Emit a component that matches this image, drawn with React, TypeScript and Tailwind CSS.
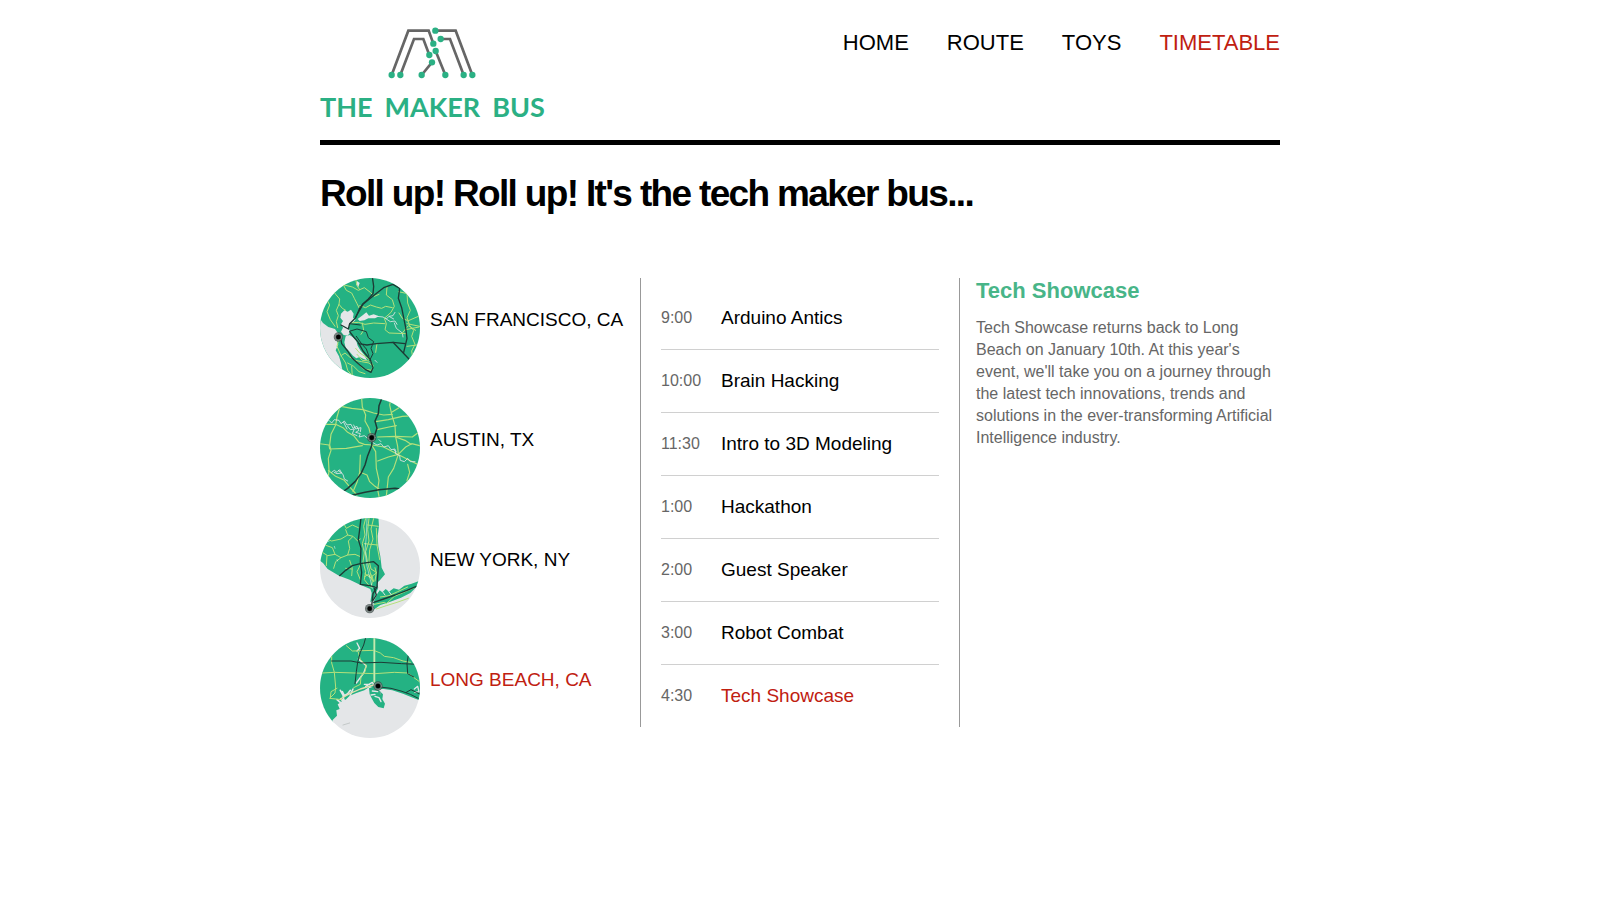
import type { ReactNode } from "react";

const navItems = [
  { label: "HOME", active: false },
  { label: "ROUTE", active: false },
  { label: "TOYS", active: false },
  { label: "TIMETABLE", active: true },
];

const events = [
  { time: "9:00", title: "Arduino Antics", active: false },
  { time: "10:00", title: "Brain Hacking", active: false },
  { time: "11:30", title: "Intro to 3D Modeling", active: false },
  { time: "1:00", title: "Hackathon", active: false },
  { time: "2:00", title: "Guest Speaker", active: false },
  { time: "3:00", title: "Robot Combat", active: false },
  { time: "4:30", title: "Tech Showcase", active: true },
];

const LAND = "#24b283";
const WATER = "#e4e6e8";
const MINOR = "#b5e07a";
const MAJOR = "#1d3b35";

function Marker({ x, y }: { x: number; y: number }) {
  return (
    <g>
      <circle cx={x} cy={y} r="14" fill="#3f4a48" fillOpacity="0.75" />
      <circle cx={x} cy={y} r="10.5" fill="none" stroke="#8b9794" strokeWidth="2" />
      <circle cx={x} cy={y} r="7" fill="#000" />
    </g>
  );
}

function MapCircle({ id, base, children }: { id: string; base: string; children: ReactNode }) {
  return (
    <svg className="size-[100px] shrink-0" viewBox="15 15 300 300" aria-hidden="true">
      <clipPath id={id}>
        <circle cx="165" cy="165" r="150" />
      </clipPath>
      <g clipPath={`url(#${id})`} fill="none" strokeLinejoin="round" strokeLinecap="round">
        <rect x="15" y="15" width="300" height="300" fill={base} />
        {children}
      </g>
    </svg>
  );
}

function SanFranciscoMap() {
  return (
    <MapCircle id="map-sf" base={LAND}>
      <g fill={WATER}>
        <path d="M10 130 L24 150 L40 162 L60 168 L70 182 L64 200 L70 214 L62 232 L72 250 L78 270 L84 300 L80 320 L10 320 Z" />
        <path d="M78 122 L88 112 L98 116 L108 110 L116 122 L114 134 L122 140 L112 150 L104 152 L102 164 L104 180 L98 188 L86 186 L78 176 L84 164 L78 154 L84 144 L76 134 Z" />
        <path d="M92 190 L104 186 L116 194 L124 204 L128 218 L136 232 L148 246 L156 262 L146 258 L134 252 L124 256 L114 248 L104 236 L92 224 L88 208 Z" />
        <path d="M128 138 L144 126 L154 118 L162 128 L176 124 L192 130 L180 136 L160 136 L148 142 L134 144 Z" />
        <path d="M126 24 L134 30 L130 42 L124 34 Z" />
      </g>
      <g stroke={WATER} strokeWidth="4">
        <path d="M186 130 L204 132 L214 138 L222 130 L234 128 L240 118 M214 138 L226 146 L240 144 L246 154 M222 130 L236 138 M180 262 L186 268 M238 150 L244 166 L262 180 L264 192" strokeWidth="2.5" />
      </g>
      <g stroke={MINOR} strokeWidth="3">
        <path d="M52 50 L62 64 L74 78 L72 94 L82 106 L92 112" />
        <path d="M72 94 L64 112 L70 128 L64 146 L68 164" />
        <path d="M84 34 L94 52 L110 60 L118 76 L126 92 L132 104" />
        <path d="M88 36 L112 42 L130 52 L148 44 L166 58 L178 70 L192 64" />
        <path d="M122 18 L126 38 L134 50" />
        <path d="M34 76 L44 96 L36 116 L46 140 L60 160" />
        <path d="M134 98 L152 104 L166 96 L184 102 L200 106 L212 100 L232 104" />
        <path d="M216 42 L214 66 L232 80 L238 100 L228 118 L208 136 L214 152 L210 170 L222 180 L272 182" />
        <path d="M106 150 L130 148 L150 154 L176 150 L210 152" />
        <path d="M142 150 L146 172 L138 184" />
        <path d="M250 56 L278 62 L290 54 M276 62 L278 90 L286 112 L276 134 L284 158 L296 172 L290 190 L300 214 L290 234 L294 258" />
        <path d="M252 120 L262 136 L276 142 M276 152 L314 160 M272 170 L312 162 M278 144 L310 130" />
        <path d="M276 220 L306 216 M262 180 L280 158 L302 172" />
        <path d="M72 196 L66 220 L78 248 L92 270 L98 292 L110 306" />
        <path d="M78 248 L90 240 L104 252 L120 262 L140 266 L162 270 L174 280" />
        <path d="M122 226 L134 240 L150 250 L166 262 L174 278 L170 292 L146 288 L128 272" />
        <path d="M98 270 L116 280 L132 296 L150 302 M110 280 L112 312" />
        <path d="M126 244 L142 262 L162 264 M186 212 L182 238" />
      </g>
      <g stroke={MAJOR} strokeWidth="4">
        <path d="M172 12 L176 40 L174 62 L160 78 L144 92 L134 106 L122 134 L104 152 L100 168 L78 156" />
        <path d="M122 132 L144 94 L178 66 L206 44 L234 34 L254 46 L250 76 L260 104 L266 134 L272 164 L276 196 L266 238" />
        <path d="M104 152 L136 156" strokeWidth="3" />
        <path d="M76 188 L80 212 L98 234 L112 256 L134 276 L152 290 L168 298 L174 284 L166 260 L144 234 L130 208 L116 192 L104 176" />
        <path d="M106 174 L126 168 L154 176 L160 194 L176 206 L168 226 L174 242 L164 262" strokeWidth="3" />
        <path d="M130 212 L156 216 L184 212 L234 208 L284 260" />
        <path d="M234 208 L270 212" />
        <path d="M124 190 L138 210 L154 228 L162 250" strokeWidth="3" />
      </g>
      <Marker x={70} y={192} />
    </MapCircle>
  );
}

function AustinMap() {
  return (
    <MapCircle id="map-austin" base={LAND}>
      <g stroke={MINOR} strokeWidth="3.5">
        <path d="M78 40 L110 46 L144 50 L176 60 L206 66 L232 64" />
        <path d="M140 16 L142 42 L152 66 L150 84 L162 106 L168 130" />
        <path d="M74 44 L66 72 L62 96 L48 124 L44 156 L48 172 L40 196 L42 232 L40 252" />
        <path d="M34 94 L62 94 L84 104 L98 118 L116 128 L132 148 L148 154 L172 156 L206 162 L248 184 L292 206 L316 218" />
        <path d="M14 152 L42 156 L44 168 L94 166 L142 158" />
        <path d="M228 16 L224 36 L230 64 L240 98 L242 132 L248 160 L250 184 L236 226 L220 252 L214 310" />
        <path d="M182 86 L220 80 L262 70 L304 68" />
        <path d="M186 110 L222 102 L244 98 M188 132 L242 130 L292 132 L308 120" />
        <path d="M170 156 L182 176 L184 226 L192 262 L188 290 L192 310" />
        <path d="M188 204 L220 192 L250 184 L272 162 L290 152 L314 158" />
        <path d="M242 132 L270 142 L288 154 M278 214 L284 238 L276 262 L284 284" />
        <path d="M136 238 L156 246 L164 266 L180 280 L192 288 M136 186 L134 238 L126 268 L114 296" />
        <path d="M40 232 L62 250 L88 262 L106 284 L126 306" />
        <path d="M272 26 L252 44 L230 58" />
      </g>
      <g stroke={WATER} strokeWidth="2.5">
        <path d="M30 88 L42 82 L50 90 L58 80 L72 82 L78 92 L88 84 L96 96 L108 94 L114 106 L126 100 L132 112 L122 118 L136 122 L132 132 L148 128 L158 136 L168 138" />
        <path d="M98 100 L106 110 L118 108 L112 122 L126 128 M116 96 L122 108 L138 104 L136 116 M86 88 L96 108" />
        <path d="M172 148 L186 156 L198 152 L206 162 L220 158 L228 170 L240 168 L242 182 L254 188 L256 202 L268 206 L278 196 L286 206 L300 206" />
        <path d="M192 140 L198 146 M236 170 L244 176" />
        <path d="M50 238 L58 232 L66 238 L74 230 L80 240 L66 242 L58 238 M70 232 L84 244 L88 258 L98 264" />
      </g>
      <g stroke={MAJOR} strokeWidth="4.5">
        <path d="M202 12 L192 38 L190 62 L180 84 L186 106 L180 124 L172 138 L170 158 L158 188 L150 216 L138 242 L120 266 L98 286 L78 300" />
        <path d="M114 306 L150 298 L192 290 L240 286 L274 290" />
      </g>
      <Marker x={170} y={134} />
    </MapCircle>
  );
}

function NewYorkMap() {
  return (
    <MapCircle id="map-ny" base={WATER}>
      <path d="M10 10 L190 10 L192 40 L188 70 L190 100 L196 130 L200 164 L210 184 L196 200 L186 210 L190 224 L182 242 L174 262 L166 268 L170 240 L166 228 L132 214 L104 200 L72 188 L38 168 L24 150 L10 140 Z" fill={LAND} />
      <path d="M176 266 L188 240 L194 232 L202 238 L212 228 L222 236 L236 226 L252 230 L268 218 L290 212 L312 204 L304 222 L286 240 L258 254 L226 266 L196 276 L176 290 Z" fill={LAND} />
      <g stroke={MINOR} strokeWidth="3">
        <path d="M152 16 L146 40 L150 66 L142 92 L148 120 L144 146 L152 176 L148 200 L164 220" />
        <path d="M162 16 L158 50 L162 84 L152 116 L158 150 L166 180 L172 206 L168 224" />
        <path d="M176 16 L168 48 L174 78 L164 110 L162 142 L168 168 L184 178 L180 204" />
        <path d="M158 36 L190 40 M148 92 L188 96 M184 46 L186 96 L194 140" />
        <path d="M92 50 L98 66 L114 70 L128 84 L136 78 M98 66 L78 78 L50 84 L34 78" />
        <path d="M84 28 L94 46 L112 36 L130 44" />
        <path d="M22 118 L38 128 L60 124 L78 134 L98 126 L104 106 L100 84 L112 72" />
        <path d="M60 124 L52 104 L30 96 M78 134 L62 146 L56 166 M98 126 L120 124 L134 130 M36 128 L34 158" />
        <path d="M104 142 L112 166 L110 188 M136 156 L126 176 L136 200 M92 166 L110 168" />
        <path d="M150 182 L166 194 L184 180 L180 164 M148 192 L160 184 L176 206 L170 186" />
        <path d="M178 274 L208 268 L214 272 L238 250 L266 238 L298 224" />
        <path d="M184 288 L214 278 L246 268 L280 256" />
        <path d="M196 252 L222 248 L248 236 L278 222" />
      </g>
      <g stroke="#ffffff" strokeWidth="1.5">
        <path d="M156 16 L154 70 L150 112 L156 160 L166 200 L172 226 M58 100 L60 106 M66 140 L68 144 M38 84 L42 86" />
      </g>
      <path d="M182 222 L194 226 L186 240 M204 238 L210 246 M222 236 L228 244" stroke={WATER} strokeWidth="3" />
      <g stroke={MAJOR} strokeWidth="4">
        <path d="M138 14 L134 50 L130 80 L138 106 L136 150 L140 178 L136 214 L164 218 L186 224" />
        <path d="M74 188 L92 172 L112 158 L136 152 L176 146 L190 158 L188 190 L186 222 L174 242 L170 280" />
        <path d="M176 268 L206 258 L240 246 L276 232 L304 220" />
        <path d="M178 226 L184 246 L174 262" />
      </g>
      <Marker x={164} y={287} />
    </MapCircle>
  );
}

function LongBeachMap() {
  return (
    <MapCircle id="map-lb" base={WATER}>
      <path d="M10 10 L320 10 L320 204 L288 192 L264 182 L232 172 L206 168 L180 168 L166 160 L148 172 L124 180 L104 188 L92 200 L76 196 L80 206 L68 214 L74 228 L64 232 L66 248 L52 262 L60 278 L10 278 Z" fill={LAND} />
      <path d="M162 166 L178 160 L194 174 L204 184 L202 198 L210 212 L206 226 L190 222 L178 210 L170 196 L164 184 Z" fill={LAND} />
      <g stroke={WATER} strokeWidth="4">
        <path d="M82 176 L88 188 L98 182 L106 172 M76 172 L84 186 L86 200 M114 168 L106 186 M66 200 L78 210" strokeWidth="5" />
        <path d="M126 30 L134 46 L126 54 M152 160 L172 148 L178 158 M148 154 L164 154 M172 174 L188 176 M180 190 L192 194 L198 206 M168 186 L180 184" />
        <path d="M130 78 L154 98 L146 120 L124 150 M298 168 L308 160 L312 176 L300 178" />
      </g>
      <g stroke={MINOR} strokeWidth="3">
        <path d="M94 38 L112 54 L176 52 L196 60 L208 70 L236 74 L264 84 L286 88" />
        <path d="M22 120 L58 118 L120 120 L180 122 L238 118 L278 120 L316 148" />
        <path d="M50 50 L50 90 L58 118 L62 162 L60 180 L44 196 L80 200" />
        <path d="M46 194 L48 176 L66 166" />
        <path d="M130 58 L136 80 L154 96 L150 116 L138 130 L136 154 L116 164" />
      </g>
      <path d="M76 198 L104 182 L136 168 L176 156" stroke="#e5dfae" strokeWidth="4" />
      <path d="M178 12 L178 146" stroke="#a8e39b" strokeWidth="6" />
      <path d="M178 12 L178 146" stroke="#d9edc5" strokeWidth="2" />
      <path d="M84 276 L104 270 M196 176 L196 184" stroke="#a3aaa8" strokeWidth="1.5" />
      <g stroke={MAJOR} strokeWidth="3">
        <path d="M152 14 L146 36 L136 58 L128 88 L124 116 L120 152" />
        <path d="M50 84 L108 84 L138 90 L198 88 L260 92 L312 94" />
        <path d="M280 66 L276 92 L278 122 L296 132" />
        <path d="M194 162 L228 166 L258 174 L286 184 L310 196 M274 178 L288 170 L304 178 L316 184" />
      </g>
      <Marker x={189} y={159} />
    </MapCircle>
  );
}

const cities = [
  { name: "SAN FRANCISCO, CA", active: false, Map: SanFranciscoMap },
  { name: "AUSTIN, TX", active: false, Map: AustinMap },
  { name: "NEW YORK, NY", active: false, Map: NewYorkMap },
  { name: "LONG BEACH, CA", active: true, Map: LongBeachMap },
];

const logoDots = [
  [379, 47], [395, 72], [373, 86], [380, 108], [361, 120], [369, 142],
  [248, 180], [274, 180], [338, 180], [409, 180], [464, 180], [490, 180],
];

function Logo() {
  return (
    <a href="#home" className="flex flex-col items-center pt-[27px] pb-[17px] text-[#2bb084]">
      <svg className="h-[52px] w-[88px]" viewBox="237 36 264 156" aria-hidden="true">
        <g fill="none" stroke="#666666" strokeWidth="8">
          <path d="M248 180 L298 47 L359 47 L373 86" />
          <path d="M274 180 L315 72 L343 72 L361 120" />
          <path d="M379 47 L440 47 L490 180" />
          <path d="M395 72 L423 72 L464 180" />
          <path d="M380 108 L409 180" />
          <path d="M369 142 L338 180" />
        </g>
        {logoDots.map(([x, y]) => (
          <circle key={`${x}-${y}`} cx={x} cy={y} r="9.5" fill="#2bb084" />
        ))}
      </svg>
      <span className="mt-3 flex gap-3 font-['Lato',sans-serif] text-[27px] leading-[32px] font-bold">
        <span>THE</span>
        <span>MAKER</span>
        <span>BUS</span>
      </span>
    </a>
  );
}

export default function App() {
  return (
    <div className="mx-auto max-w-[960px] bg-white font-['Liberation_Sans',Arial,sans-serif] text-black">
      <header className="flex flex-wrap items-start justify-between border-b-[5px] border-black">
        <Logo />
        <nav className="pt-[29px]">
          <ul className="flex flex-wrap gap-[38px] text-[22px] leading-7">
            {navItems.map((item) => (
              <li key={item.label}>
                <a href={`#${item.label.toLowerCase()}`} className={item.active ? "text-[#c02010]" : "text-black"}>
                  {item.label}
                </a>
              </li>
            ))}
          </ul>
        </nav>
      </header>

      <main>
        <h1 className="mt-[29px] text-[37px] leading-10 font-bold tracking-[-0.045em]">
          Roll up! Roll up! It's the tech maker bus...
        </h1>

        <div className="mt-16 grid grid-cols-1 items-start md:grid-cols-3">
          <ul className="flex flex-col gap-5">
            {cities.map(({ name, active, Map }) => (
              <li key={name}>
                <a
                  href="#timetable"
                  className={`flex items-start gap-[10px] text-[19px] leading-7 ${active ? "text-[#c02010]" : "text-black"}`}
                >
                  <Map />
                  <span className="pt-7 whitespace-nowrap">{name}</span>
                </a>
              </li>
            ))}
          </ul>

          <section className="border-x border-[#999999] px-5 pt-[9px]" aria-label="Events">
            <table className="w-full border-separate border-spacing-0 text-left">
              <tbody>
                {events.map((event) => (
                  <tr key={event.time} className="group">
                    <td className="h-[63px] w-[60px] border-b border-[#d0d0d0] text-base text-[#666666] group-last:h-[62px] group-last:border-b-0">
                      {event.time}
                    </td>
                    <td className="h-[63px] border-b border-[#d0d0d0] text-[19px] leading-6 group-last:h-[62px] group-last:border-b-0">
                      <a href="#event" className={event.active ? "text-[#c02010]" : "text-black"}>
                        {event.title}
                      </a>
                    </td>
                  </tr>
                ))}
              </tbody>
            </table>
          </section>

          <article className="pt-px pl-4">
            <h2 className="text-[22px] leading-6 font-bold text-[#48b588]">Tech Showcase</h2>
            <p className="mt-[14px] text-base leading-[22px] text-[#666666]">
              Tech Showcase returns back to Long Beach on January 10th. At this year's event, we'll take you on a
              journey through the latest tech innovations, trends and solutions in the ever-transforming Artificial
              Intelligence industry.
            </p>
          </article>
        </div>
      </main>
    </div>
  );
}
